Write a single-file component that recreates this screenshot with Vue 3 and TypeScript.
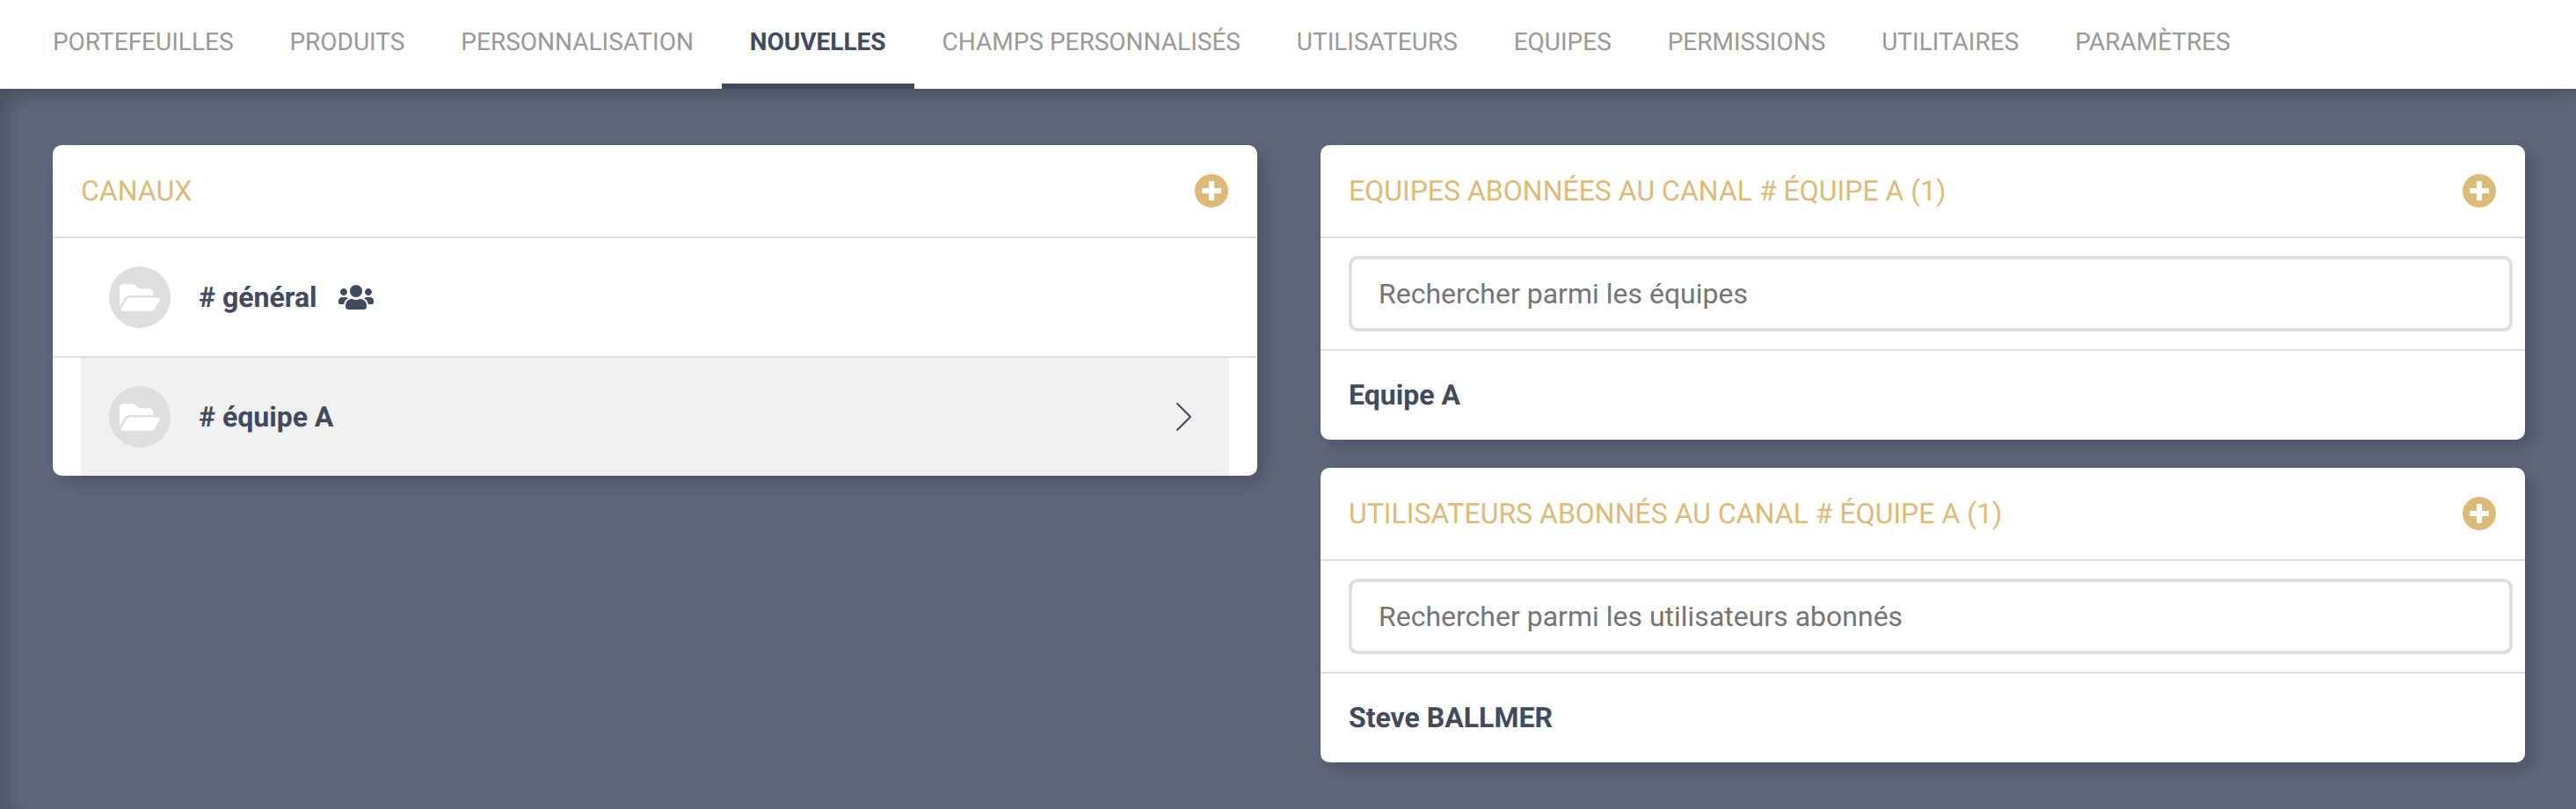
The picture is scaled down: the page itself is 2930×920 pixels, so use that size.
<script setup lang="ts">
interface Channel {
    name: string,
    shared?: boolean,
    selected?: boolean,
}

interface Panel {
    title: string,
    placeholder: string,
    entry: string,
}

const tabs: string[] = [
    'PORTEFEUILLES', 'PRODUITS', 'PERSONNALISATION', 'NOUVELLES', 'CHAMPS PERSONNALISÉS',
    'UTILISATEURS', 'EQUIPES', 'PERMISSIONS', 'UTILITAIRES', 'PARAMÈTRES',
];

const channels: Channel[] = [
    { name: '# général', shared: true },
    { name: '# équipe A', selected: true },
];

const panels: Panel[] = [
    {
        title: 'EQUIPES ABONNÉES AU CANAL # ÉQUIPE A (1)',
        placeholder: 'Rechercher parmi les équipes',
        entry: 'Equipe A',
    },
    {
        title: 'UTILISATEURS ABONNÉS AU CANAL # ÉQUIPE A (1)',
        placeholder: 'Rechercher parmi les utilisateurs abonnés',
        entry: 'Steve BALLMER',
    },
];

const plusPath = 'M256 8C119 8 8 119 8 256s111 248 248 248 248-111 248-248S393 8 256 8zm144 276c0 6.6-5.4 12-12 12h-92v92c0 6.6-5.4 12-12 12h-56c-6.6 0-12-5.4-12-12v-92h-92c-6.6 0-12-5.4-12-12v-56c0-6.6 5.4-12 12-12h92v-92c0-6.6 5.4-12 12-12h56c6.6 0 12 5.4 12 12v92h92c6.6 0 12 5.4 12 12v56z';
</script>

<template>
    <div class="page">
        <nav class="tabs">
            <a v-for="tab in tabs" :key="tab" class="tab" :class="{ active: tab === 'NOUVELLES' }">{{ tab }}</a>
        </nav>
        <main class="content">
            <section class="column">
                <div class="card">
                    <header class="card-head">
                        <span class="card-title">CANAUX</span>
                        <svg class="plus" viewBox="8 8 496 496"><path :d="plusPath" /></svg>
                    </header>
                    <div v-for="channel in channels" :key="channel.name" class="channel-line">
                        <div class="channel" :class="{ selected: channel.selected }">
                            <span class="avatar">
                                <svg class="folder" viewBox="0 0 576 512">
                                    <path d="M572.694 292.093L500.27 416.248A63.997 63.997 0 0 1 444.989 448H45.025c-18.523 0-30.064-20.093-20.731-36.093l72.424-124.155A64 64 0 0 1 152 256h399.964c18.523 0 30.064 20.093 20.73 36.093zM152 224h328v-48c0-26.51-21.49-48-48-48H272l-64-64H48C21.49 64 0 85.49 0 112v278.046l69.077-118.418C86.214 242.25 117.989 224 152 224z" />
                                </svg>
                            </span>
                            <span class="channel-name">{{ channel.name }}</span>
                            <svg v-if="channel.shared" class="users" viewBox="0 0 640 512">
                                <path d="M96 224c35.3 0 64-28.7 64-64s-28.7-64-64-64-64 28.7-64 64 28.7 64 64 64zm448 0c35.3 0 64-28.7 64-64s-28.7-64-64-64-64 28.7-64 64 28.7 64 64 64zm32 32h-64c-17.6 0-33.5 7.1-45.1 18.6 40.3 22.1 68.9 62 75.1 109.4h66c17.7 0 32-14.3 32-32v-32c0-35.3-28.7-64-64-64zm-256 0c61.9 0 112-50.1 112-112S381.9 32 320 32 208 82.1 208 144s50.1 112 112 112zm76.8 32h-8.3c-20.8 10-43.9 16-68.5 16s-47.6-6-68.5-16h-8.3C179.6 288 128 339.6 128 403.2V432c0 26.5 21.5 48 48 48h288c26.5 0 48-21.5 48-48v-28.8c0-63.6-51.6-115.2-115.2-115.2zm-223.7-13.4C161.5 263.1 145.6 256 128 256H64c-35.3 0-64 28.7-64 64v32c0 17.7 14.3 32 32 32h65.9c6.3-47.4 34.9-87.3 75.2-109.4z" />
                            </svg>
                            <svg v-if="channel.selected" class="chevron" viewBox="0 0 17 32">
                                <polyline points="1,1 16,16 1,31" />
                            </svg>
                        </div>
                    </div>
                </div>
            </section>
            <section class="column">
                <div v-for="panel in panels" :key="panel.title" class="card">
                    <header class="card-head">
                        <span class="card-title">{{ panel.title }}</span>
                        <svg class="plus" viewBox="8 8 496 496"><path :d="plusPath" /></svg>
                    </header>
                    <div class="search">
                        <input class="search-input" type="text" :placeholder="panel.placeholder" />
                    </div>
                    <div class="entry">{{ panel.entry }}</div>
                </div>
            </section>
        </main>
    </div>
</template>

<style>
body {
    background: #5f677a;
}
</style>

<style scoped>
.page {
    min-height: 920px;
    display: flex;
    flex-direction: column;
    font-family: Roboto, "Liberation Sans", sans-serif;
    text-rendering: geometricPrecision;
}

.tabs {
    height: 101px;
    flex-shrink: 0;
    display: flex;
    padding-left: 28px;
    background: #ffffff;
    position: relative;
    z-index: 1;
    box-shadow: 0 8px 24px rgba(0, 0, 0, 0.2);
}

.tab {
    height: 95px;
    padding: 0 31.95px;
    display: flex;
    align-items: center;
    font-size: 28px;
    color: #999999;
    border-bottom: 6px solid transparent;
}

.tab.active {
    color: #424a5e;
    font-weight: 700;
    border-bottom-color: #424a5e;
}

.content {
    flex: 1;
    display: grid;
    grid-template-columns: 1370px 1370px;
    column-gap: 72px;
    padding: 64px 58px 0 60px;
    align-items: start;
    box-shadow: inset 20px 0 24px -12px rgba(0, 0, 0, 0.2);
}

.column {
    display: flex;
    flex-direction: column;
    gap: 32px;
}

.card {
    background: #ffffff;
    border-radius: 10px;
    box-shadow: 8px 8px 24px rgba(0, 0, 0, 0.2);
}

.card-head {
    height: 104px;
    padding: 0 32px;
    display: flex;
    align-items: center;
    justify-content: space-between;
    border-bottom: 2px solid #dedede;
}

.card-title {
    font-size: 32px;
    font-weight: 400;
    color: #deba78;
}

.plus {
    width: 38px;
    height: 38px;
    margin-right: 1px;
    fill: #deba78;
}

.channel-line {
    padding: 0 32px;
}

.channel-line:first-of-type {
    border-bottom: 2px solid #dedede;
}

.channel {
    height: 134px;
    padding: 0 32px;
    display: flex;
    align-items: center;
}

.channel.selected {
    background: #f1f1f1;
}

.avatar {
    width: 70px;
    height: 70px;
    flex-shrink: 0;
    border-radius: 50%;
    background: #dedede;
    display: flex;
    align-items: center;
    justify-content: center;
}

.folder {
    width: 46px;
    height: 41px;
    fill: #ffffff;
}

.channel-name {
    margin-left: 32px;
    font-size: 32px;
    font-weight: 700;
    color: #424a5e;
}

.users {
    width: 40px;
    height: 32px;
    margin-left: 25px;
    fill: #424a5e;
}

.chevron {
    width: 17px;
    height: 32px;
    margin-left: auto;
    margin-right: 11px;
    fill: none;
    stroke: #424a5e;
    stroke-width: 2;
    stroke-linecap: round;
}

.search {
    padding: 20px 14px 20px 32px;
    border-bottom: 2px solid #dedede;
}

.search-input {
    display: block;
    width: 100%;
    height: 86px;
    box-sizing: border-box;
    padding: 0 30px;
    border: 4px solid #dedede;
    border-radius: 10px;
    outline: none;
    background: #ffffff;
    font-family: inherit;
    font-size: 32px;
    color: #757575;
}

.search-input::placeholder {
    color: #757575;
    opacity: 1;
}

.entry {
    height: 99px;
    padding: 0 32px 2px;
    display: flex;
    align-items: center;
    font-size: 32px;
    font-weight: 700;
    color: #424a5e;
}
</style>
